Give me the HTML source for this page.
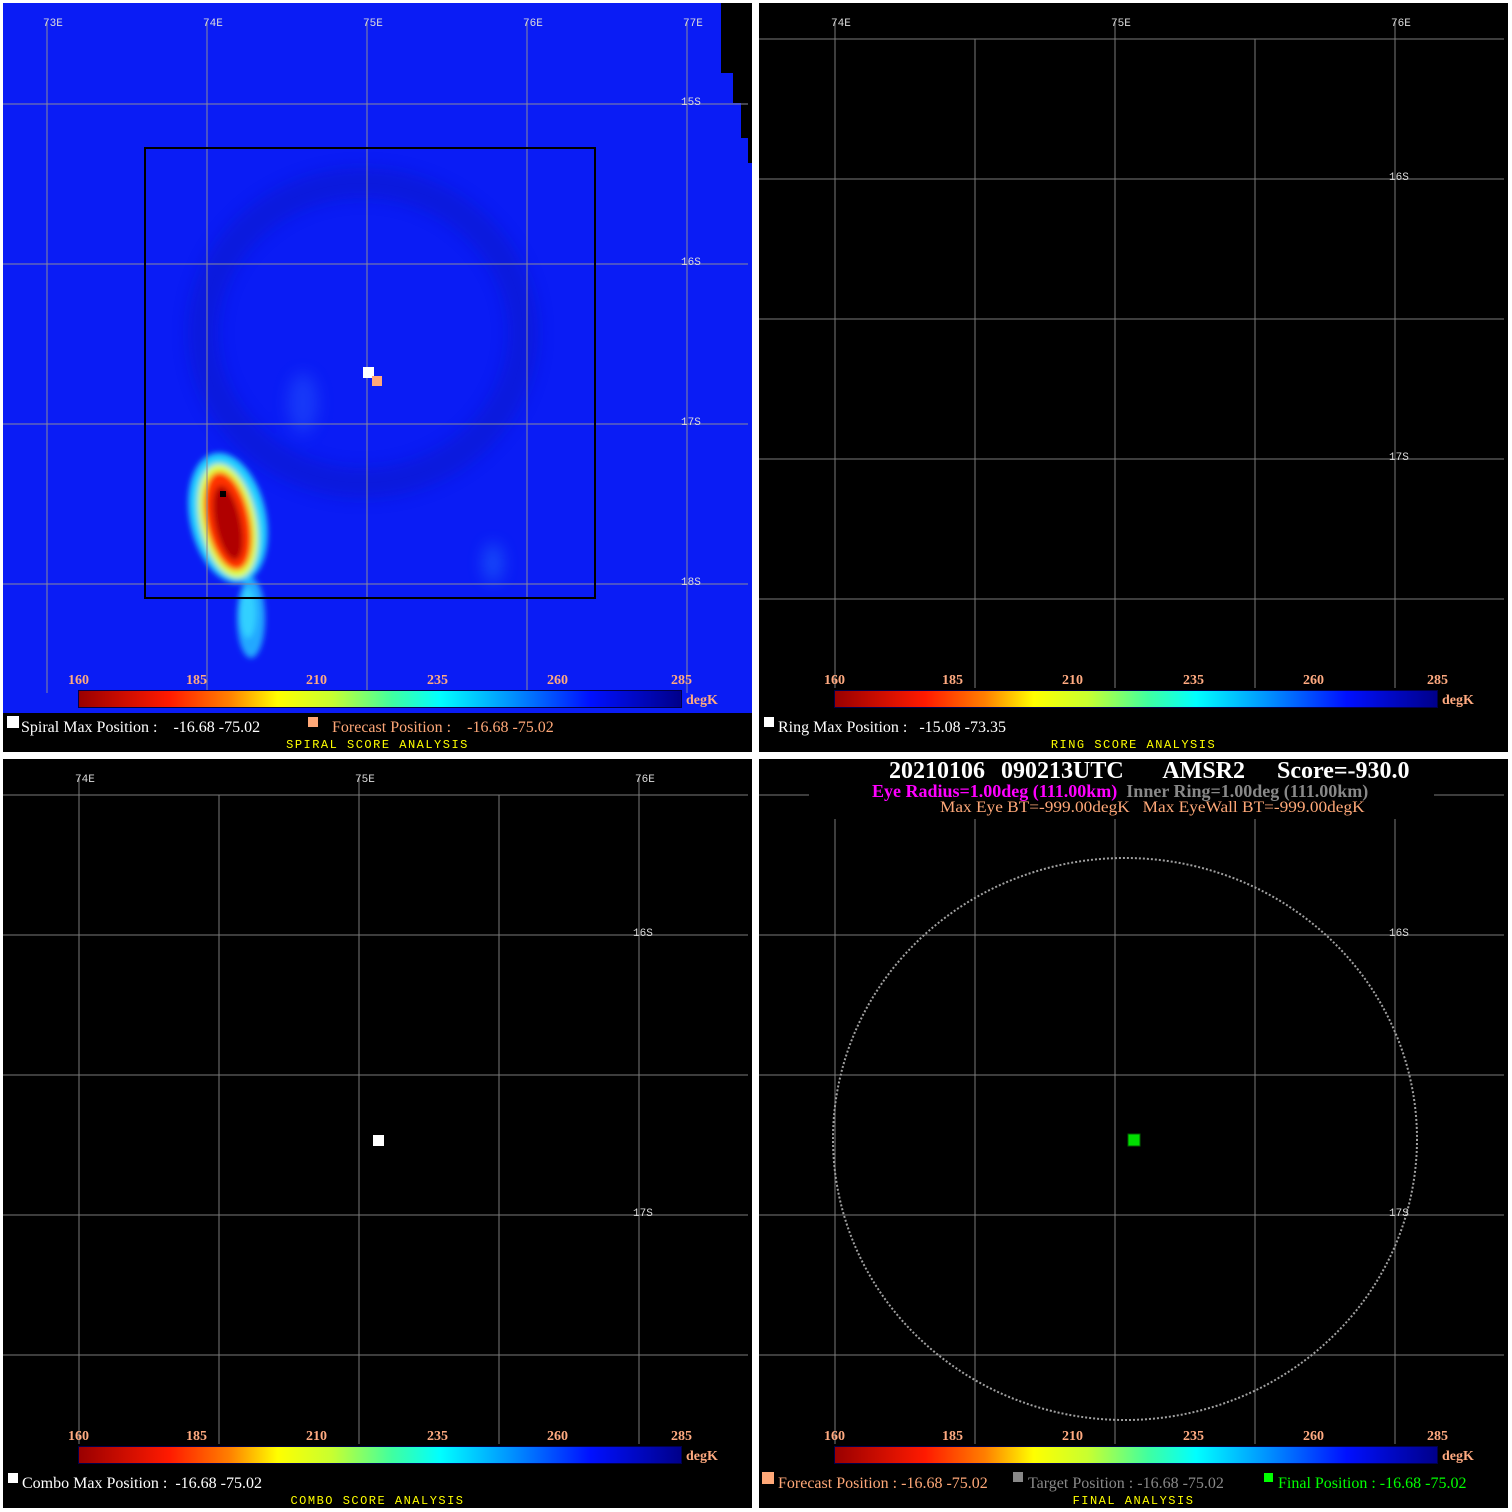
<!DOCTYPE html>
<html><head><meta charset="utf-8"><style>
body{margin:0;width:1512px;height:1512px;background:#fff;position:relative;overflow:hidden;font-family:"Liberation Serif",serif}
.p{position:absolute;width:749px;height:749px;background:#000;overflow:hidden}
.t{position:absolute;white-space:nowrap;font-weight:bold;transform-origin:left top}
.lg{position:absolute;white-space:nowrap;font-size:16px;transform-origin:left top}
.lab{position:absolute;font-family:"Liberation Mono",monospace;font-size:11px;color:#ddd;letter-spacing:0px}
.ttl{position:absolute;font-family:"Liberation Mono",monospace;font-size:12px;letter-spacing:1.5px;color:#ff0;width:749px;text-align:center}
.cb{position:absolute;height:16px;width:602px;border:1px solid #00004a;background:linear-gradient(90deg,#9a0000,#ff1a00 15%,#ff8000 25%,#ffff00 33%,#c8ff30 42%,#40ffa0 52%,#00ffff 60%,#0090ff 72%,#0010ff 85%,#00008a)}
.n{position:absolute;color:#ffaa80;font-size:14px;font-weight:bold}
</style></head><body>

<!-- TL -->
<div class="p" style="left:3px;top:3px;background:#0a1cf5">
<svg width="749" height="749" style="position:absolute;left:0;top:0">
<defs><filter id="b"><feGaussianBlur stdDeviation="8"/></filter><filter id="b2"><feGaussianBlur stdDeviation="3"/></filter></defs>
<g filter="url(#b)" opacity=".35">
<ellipse cx="360" cy="330" rx="160" ry="150" fill="none" stroke="#0a12b0" stroke-width="30"/>
<ellipse cx="300" cy="400" rx="15" ry="30" fill="#3070ff"/>
<ellipse cx="490" cy="560" rx="10" ry="20" fill="#30a0ff"/>
</g>
<g filter="url(#b2)">
<ellipse cx="248" cy="615" rx="14" ry="40" fill="#20a8ff"/>
<ellipse cx="245" cy="610" rx="8" ry="25" fill="#30d0ff"/>
<ellipse cx="225" cy="515" rx="38" ry="66" fill="#20d0ff" transform="rotate(-12 225 515)"/>
<ellipse cx="225" cy="518" rx="28" ry="58" fill="#e0ff40" transform="rotate(-12 225 518)"/>
<ellipse cx="225" cy="518" rx="22" ry="50" fill="#ff3000" transform="rotate(-12 225 518)"/>
<ellipse cx="225" cy="520" rx="13" ry="38" fill="#b00000" transform="rotate(-12 225 520)"/>
</g>
<rect x="217" y="488" width="6" height="6" fill="#000"/>
<polygon points="718,0 749,0 749,160 745,160 745,135 738,135 738,100 730,100 730,70 718,70" fill="#000"/>
<g stroke="#8a8a9a" stroke-width="1">
<line x1="44" y1="18" x2="44" y2="690"/><line x1="204" y1="18" x2="204" y2="690"/><line x1="364" y1="18" x2="364" y2="690"/><line x1="524" y1="18" x2="524" y2="690"/><line x1="684" y1="18" x2="684" y2="690"/>
<line x1="0" y1="101" x2="745" y2="101"/><line x1="0" y1="261" x2="745" y2="261"/><line x1="0" y1="421" x2="745" y2="421"/><line x1="0" y1="581" x2="745" y2="581"/>
</g>
<rect x="142" y="145" width="450" height="450" fill="none" stroke="#000" stroke-width="2"/>
<rect x="360" y="364" width="11" height="11" fill="#fff"/><rect x="369" y="373" width="10" height="10" fill="#ffa878"/>
<rect x="0" y="710" width="749" height="39" fill="#000"/>
</svg>
<div class="lab" style="left:40px;top:15px">73E</div><div class="lab" style="left:200px;top:15px">74E</div><div class="lab" style="left:360px;top:15px">75E</div><div class="lab" style="left:520px;top:15px">76E</div><div class="lab" style="left:680px;top:15px">77E</div>
<div class="lab" style="left:678px;top:94px">15S</div><div class="lab" style="left:678px;top:254px">16S</div><div class="lab" style="left:678px;top:414px">17S</div><div class="lab" style="left:678px;top:574px">18S</div>
</div>

<!-- TR -->
<div class="p" style="left:759px;top:3px">
<svg width="749" height="749" style="position:absolute;left:0;top:0"><g stroke="#7a7a7a" stroke-width="1">
<line x1="76" y1="18" x2="76" y2="685"/><line x1="216" y1="36" x2="216" y2="685"/><line x1="356" y1="18" x2="356" y2="685"/><line x1="496" y1="36" x2="496" y2="685"/><line x1="636" y1="18" x2="636" y2="685"/>
<line x1="0" y1="36" x2="745" y2="36"/><line x1="0" y1="176" x2="745" y2="176"/><line x1="0" y1="316" x2="745" y2="316"/><line x1="0" y1="456" x2="745" y2="456"/><line x1="0" y1="596" x2="745" y2="596"/></g></svg>
<div class="lab" style="left:72px;top:15px">74E</div><div class="lab" style="left:352px;top:15px">75E</div><div class="lab" style="left:632px;top:15px">76E</div>
<div class="lab" style="left:630px;top:169px">16S</div><div class="lab" style="left:630px;top:449px">17S</div>
</div>

<!-- BL -->
<div class="p" style="left:3px;top:759px">
<svg width="749" height="749" style="position:absolute;left:0;top:0"><g stroke="#7a7a7a" stroke-width="1">
<line x1="76" y1="18" x2="76" y2="685"/><line x1="216" y1="36" x2="216" y2="685"/><line x1="356" y1="18" x2="356" y2="685"/><line x1="496" y1="36" x2="496" y2="685"/><line x1="636" y1="18" x2="636" y2="685"/>
<line x1="0" y1="36" x2="745" y2="36"/><line x1="0" y1="176" x2="745" y2="176"/><line x1="0" y1="316" x2="745" y2="316"/><line x1="0" y1="456" x2="745" y2="456"/><line x1="0" y1="596" x2="745" y2="596"/></g>
<rect x="370" y="376" width="11" height="11" fill="#fff"/></svg>
<div class="lab" style="left:72px;top:15px">74E</div><div class="lab" style="left:352px;top:15px">75E</div><div class="lab" style="left:632px;top:15px">76E</div>
<div class="lab" style="left:630px;top:169px">16S</div><div class="lab" style="left:630px;top:449px">17S</div>
</div>

<!-- BR -->
<div class="p" style="left:759px;top:759px">
<svg width="749" height="749" style="position:absolute;left:0;top:0"><g stroke="#7a7a7a" stroke-width="1">
<line x1="76" y1="60" x2="76" y2="685"/><line x1="216" y1="60" x2="216" y2="685"/><line x1="356" y1="60" x2="356" y2="685"/><line x1="496" y1="60" x2="496" y2="685"/><line x1="636" y1="60" x2="636" y2="685"/>
<line x1="0" y1="36" x2="50" y2="36"/><line x1="675" y1="36" x2="745" y2="36"/><line x1="0" y1="176" x2="745" y2="176"/><line x1="0" y1="316" x2="745" y2="316"/><line x1="0" y1="456" x2="745" y2="456"/><line x1="0" y1="596" x2="745" y2="596"/></g>
<ellipse cx="366" cy="380" rx="292" ry="281" fill="none" stroke="#a0a0a0" stroke-width="2" stroke-dasharray="2 2"/>
<rect x="369" y="375" width="12" height="12" fill="#00e000" stroke="#006000"/></svg>
<div class="lab" style="left:630px;top:169px">16S</div><div class="lab" style="left:630px;top:449px">17S</div>
<div class="t" style="left:130px;top:-1px;font-size:24px;color:#fff;word-spacing:2px">20210106&nbsp; 090213UTC &nbsp;&nbsp;&nbsp; AMSR2 &nbsp;&nbsp; Score=-930.0</div>
<div class="t" style="left:113px;top:22px;font-size:18px;color:#ff00ff">Eye Radius=1.00deg (111.00km) &nbsp;<span style="color:#888">Inner Ring=1.00deg (111.00km)</span></div>
<div class="t" style="left:181px;top:40px;font-size:16px;font-weight:normal;color:#ffa878;transform:scaleX(1.08)">Max Eye BT=-999.00degK &nbsp;&nbsp;Max EyeWall BT=-999.00degK</div>
</div>

<!-- colorbars -->
<div class="cb" style="left:78px;top:690px"></div><div class="cb" style="left:834px;top:690px"></div>
<div class="cb" style="left:78px;top:1446px"></div><div class="cb" style="left:834px;top:1446px"></div>
<div class="n" style="left:68px;top:673px">160</div><div class="n" style="left:186px;top:673px">185</div><div class="n" style="left:306px;top:673px">210</div><div class="n" style="left:427px;top:673px">235</div><div class="n" style="left:547px;top:673px">260</div><div class="n" style="left:671px;top:673px">285</div><div class="n" style="left:686px;top:693px">degK</div>
<div class="n" style="left:824px;top:673px">160</div><div class="n" style="left:942px;top:673px">185</div><div class="n" style="left:1062px;top:673px">210</div><div class="n" style="left:1183px;top:673px">235</div><div class="n" style="left:1303px;top:673px">260</div><div class="n" style="left:1427px;top:673px">285</div><div class="n" style="left:1442px;top:693px">degK</div>
<div class="n" style="left:68px;top:1429px">160</div><div class="n" style="left:186px;top:1429px">185</div><div class="n" style="left:306px;top:1429px">210</div><div class="n" style="left:427px;top:1429px">235</div><div class="n" style="left:547px;top:1429px">260</div><div class="n" style="left:671px;top:1429px">285</div><div class="n" style="left:686px;top:1449px">degK</div>
<div class="n" style="left:824px;top:1429px">160</div><div class="n" style="left:942px;top:1429px">185</div><div class="n" style="left:1062px;top:1429px">210</div><div class="n" style="left:1183px;top:1429px">235</div><div class="n" style="left:1303px;top:1429px">260</div><div class="n" style="left:1427px;top:1429px">285</div><div class="n" style="left:1442px;top:1449px">degK</div>

<!-- legends -->
<div style="position:absolute;left:7px;top:716px;width:12px;height:12px;background:#fff"></div>
<div class="lg" style="left:21px;top:719px;color:#fff">Spiral Max Position : &nbsp;&nbsp;&nbsp;-16.68 -75.02</div>
<div style="position:absolute;left:308px;top:717px;width:10px;height:10px;background:#ffa878"></div>
<div class="lg" style="left:332px;top:719px;color:#ffa878">Forecast Position : &nbsp;&nbsp;&nbsp;-16.68 -75.02</div>
<div class="ttl" style="left:3px;top:738px">SPIRAL SCORE ANALYSIS</div>

<div style="position:absolute;left:764px;top:717px;width:10px;height:10px;background:#fff"></div>
<div class="lg" style="left:778px;top:719px;color:#fff">Ring Max Position : &nbsp;&nbsp;-15.08 -73.35</div>
<div class="ttl" style="left:759px;top:738px">RING SCORE ANALYSIS</div>

<div style="position:absolute;left:8px;top:1473px;width:10px;height:10px;background:#fff"></div>
<div class="lg" style="left:22px;top:1475px;color:#fff">Combo Max Position : &nbsp;-16.68 -75.02</div>
<div class="ttl" style="left:3px;top:1494px">COMBO SCORE ANALYSIS</div>

<div style="position:absolute;left:762px;top:1472px;width:12px;height:12px;background:#ffa878"></div>
<div class="lg" style="left:778px;top:1475px;color:#ffa878">Forecast Position : -16.68 -75.02</div>
<div style="position:absolute;left:1013px;top:1472px;width:10px;height:10px;background:#888"></div>
<div class="lg" style="left:1028px;top:1475px;color:#888">Target Position : -16.68 -75.02</div>
<div style="position:absolute;left:1264px;top:1473px;width:9px;height:9px;background:#00ff00"></div>
<div class="lg" style="left:1278px;top:1475px;color:#00ff00">Final Position : -16.68 -75.02</div>
<div class="ttl" style="left:759px;top:1494px">FINAL ANALYSIS</div>
</body></html>
